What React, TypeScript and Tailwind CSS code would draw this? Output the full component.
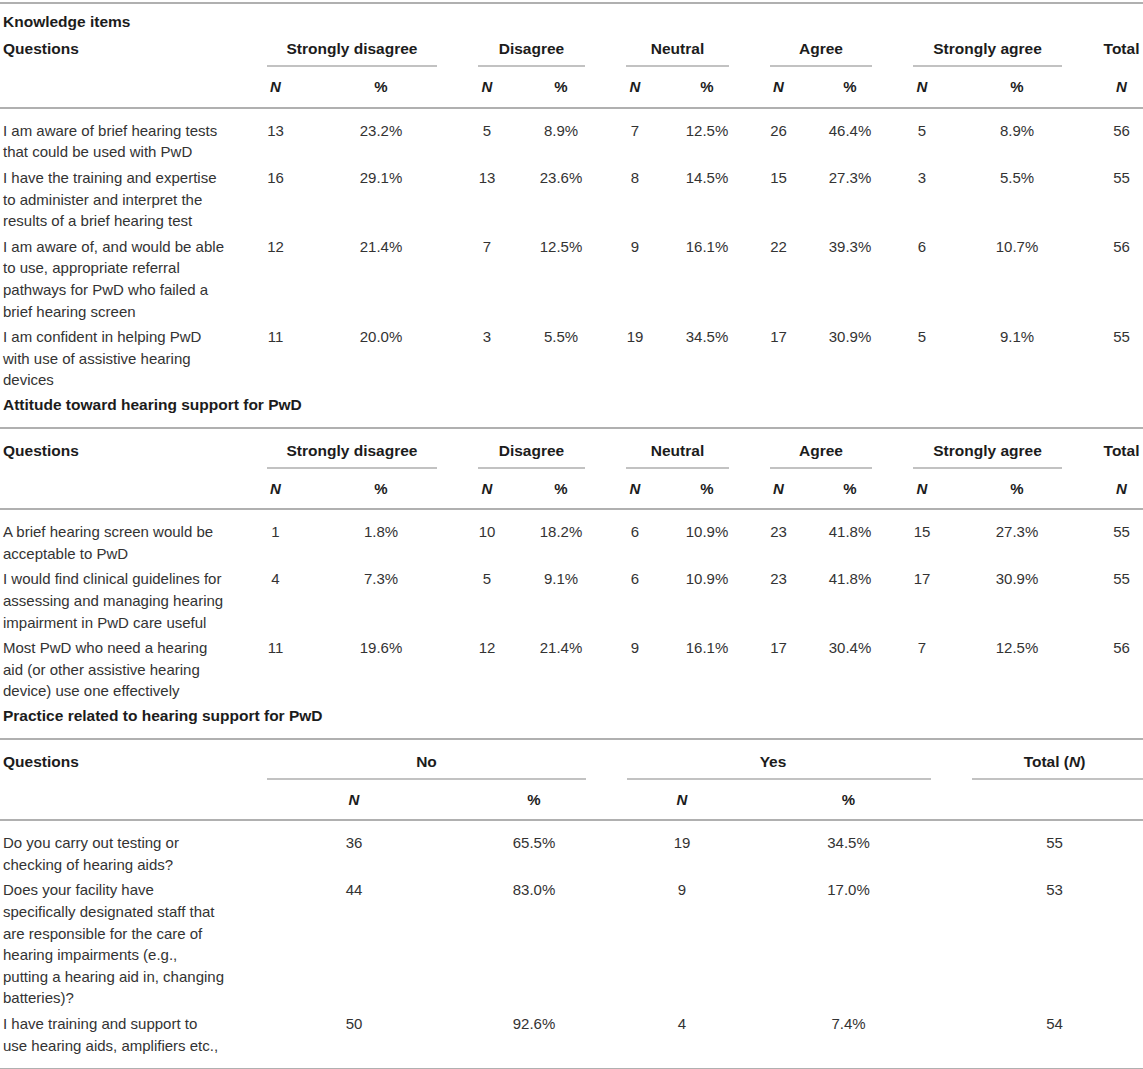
import { Fragment } from 'react';

type LikertRow = { q: string; cells: [number, string][]; total: number };
type YesNoRow = { q: string; no: [number, string]; yes: [number, string]; total: number };

const groups = ['Strongly disagree', 'Disagree', 'Neutral', 'Agree', 'Strongly agree'];

const knowledge: LikertRow[] = [
  {
    q: 'I am aware of brief hearing tests that could be used with PwD',
    cells: [[13, '23.2%'], [5, '8.9%'], [7, '12.5%'], [26, '46.4%'], [5, '8.9%']],
    total: 56,
  },
  {
    q: 'I have the training and expertise to administer and interpret the results of a brief hearing test',
    cells: [[16, '29.1%'], [13, '23.6%'], [8, '14.5%'], [15, '27.3%'], [3, '5.5%']],
    total: 55,
  },
  {
    q: 'I am aware of, and would be able to use, appropriate referral pathways for PwD who failed a brief hearing screen',
    cells: [[12, '21.4%'], [7, '12.5%'], [9, '16.1%'], [22, '39.3%'], [6, '10.7%']],
    total: 56,
  },
  {
    q: 'I am confident in helping PwD with use of assistive hearing devices',
    cells: [[11, '20.0%'], [3, '5.5%'], [19, '34.5%'], [17, '30.9%'], [5, '9.1%']],
    total: 55,
  },
];

const attitude: LikertRow[] = [
  {
    q: 'A brief hearing screen would be acceptable to PwD',
    cells: [[1, '1.8%'], [10, '18.2%'], [6, '10.9%'], [23, '41.8%'], [15, '27.3%']],
    total: 55,
  },
  {
    q: 'I would find clinical guidelines for assessing and managing hearing impairment in PwD care useful',
    cells: [[4, '7.3%'], [5, '9.1%'], [6, '10.9%'], [23, '41.8%'], [17, '30.9%']],
    total: 55,
  },
  {
    q: 'Most PwD who need a hearing aid (or other assistive hearing device) use one effectively',
    cells: [[11, '19.6%'], [12, '21.4%'], [9, '16.1%'], [17, '30.4%'], [7, '12.5%']],
    total: 56,
  },
];

const practice: YesNoRow[] = [
  { q: 'Do you carry out testing or checking of hearing aids?', no: [36, '65.5%'], yes: [19, '34.5%'], total: 55 },
  {
    q: 'Does your facility have specifically designated staff that are responsible for the care of hearing impairments (e.g., putting a hearing aid in, changing batteries)?',
    no: [44, '83.0%'],
    yes: [9, '17.0%'],
    total: 53,
  },
  { q: 'I have training and support to use hearing aids, amplifiers etc.,', no: [50, '92.6%'], yes: [4, '7.4%'], total: 54 },
];

const likertGrid = 'grid grid-cols-[226px_17px_112px_18px_48px_18px_44px_17px_44px_18px_90px_37px] gap-x-[41px]';
const yesNoGrid = 'grid grid-cols-[226px_174px_104px_110px_153px_171px] gap-x-[41px]';

function Rule({ className = '' }: { className?: string }) {
  return <div className={`h-[2px] shrink-0 bg-[#b0b0b0] ${className}`} />;
}

function Title({ children, className = '' }: { children: string; className?: string }) {
  return <div className={`pl-[3px] text-[15.5px] font-bold text-[#1c1c1c] ${className}`}>{children}</div>;
}

function LikertTable({ rows }: { rows: LikertRow[] }) {
  return (
    <>
      <div className={`${likertGrid} mt-[11px] font-bold text-[#1c1c1c]`}>
        <div className="pl-[3px] text-[15.5px]">Questions</div>
        {groups.map((g) => (
          <div key={g} className="col-span-2 text-center text-[15.5px] whitespace-nowrap">{g}</div>
        ))}
        <div className="text-center text-[15.5px]">Total</div>

        <div />
        {groups.map((g) => (
          <div key={g} className="col-span-2 mt-[5.5px] h-[2px] bg-[#c2c2c2]" />
        ))}
        <div />

        <div />
        {groups.map((g) => (
          <Fragment key={g}>
            <div className="mt-[9px] text-center italic">N</div>
            <div className="mt-[9px] text-center">%</div>
          </Fragment>
        ))}
        <div className="mt-[9px] text-center italic">N</div>
      </div>
      <Rule className="mt-[9px]" />
      <div className={`${likertGrid} mt-[9px]`}>
        {rows.map((r) => (
          <Fragment key={r.q}>
            <div className="py-[2px] pl-[3px] pr-[1px]">{r.q}</div>
            {r.cells.map(([n, p], i) => (
              <Fragment key={i}>
                <div className="py-[2px] text-center">{n}</div>
                <div className="py-[2px] text-center">{p}</div>
              </Fragment>
            ))}
            <div className="py-[2px] text-center">{r.total}</div>
          </Fragment>
        ))}
      </div>
    </>
  );
}

function YesNoTable({ rows }: { rows: YesNoRow[] }) {
  return (
    <>
      <div className={`${yesNoGrid} mt-[11px] font-bold text-[#1c1c1c]`}>
        <div className="pl-[3px] text-[15.5px]">Questions</div>
        <div className="col-span-2 text-center text-[15.5px]">No</div>
        <div className="col-span-2 pr-[12px] text-center text-[15.5px]">Yes</div>
        <div className="pr-[6px] text-center text-[15.5px]">
          Total (<span className="italic">N</span>)
        </div>

        <div />
        <div className="col-span-2 mt-[5.5px] h-[2px] bg-[#c2c2c2]" />
        <div className="col-span-2 mt-[5.5px] h-[2px] bg-[#c2c2c2]" />
        <div className="mt-[5.5px] h-[2px] bg-[#c2c2c2]" />

        <div />
        <div className="mt-[9px] text-center italic">N</div>
        <div className="mt-[9px] text-center">%</div>
        <div className="mt-[9px] text-center italic">N</div>
        <div className="mt-[9px] pr-[12px] text-center">%</div>
        <div className="mt-[9px]">&nbsp;</div>
      </div>
      <Rule className="mt-[9px]" />
      <div className={`${yesNoGrid} mt-[9px]`}>
        {rows.map((r) => (
          <Fragment key={r.q}>
            <div className="py-[2px] pl-[3px] pr-[1px]">{r.q}</div>
            <div className="py-[2px] text-center">{r.no[0]}</div>
            <div className="py-[2px] text-center">{r.no[1]}</div>
            <div className="py-[2px] text-center">{r.yes[0]}</div>
            <div className="py-[2px] pr-[12px] text-center">{r.yes[1]}</div>
            <div className="py-[2px] pr-[6px] text-center">{r.total}</div>
          </Fragment>
        ))}
      </div>
    </>
  );
}

export default function App() {
  return (
    <div className="h-[1069px] overflow-hidden bg-white">
      <div className="flex w-[1143px] flex-col pt-[2px] font-['Liberation_Sans',Arial,sans-serif] text-[15px] leading-[21.6px] text-[#333]">
        <Rule />
        <Title className="pt-[7px]">Knowledge items</Title>
        <div className="-mt-[5.5px]">
          <LikertTable rows={knowledge} />
        </div>

        <Title className="pt-[1px]">Attitude toward hearing support for PwD</Title>
        <Rule className="mt-[11px]" />
        <LikertTable rows={attitude} />

        <Title className="pt-[1px]">Practice related to hearing support for PwD</Title>
        <Rule className="mt-[11px]" />
        <YesNoTable rows={practice} />
        <Rule className="mt-[10px]" />
      </div>
    </div>
  );
}
